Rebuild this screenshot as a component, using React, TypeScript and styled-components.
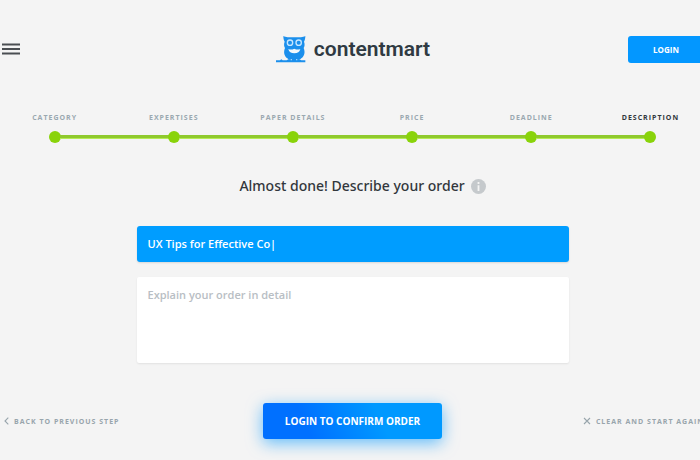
import React, { useState } from "react";
import styled, { createGlobalStyle } from "styled-components";

const GlobalStyle = createGlobalStyle`
  * { box-sizing: border-box; }
  body {
    margin: 0;
    background: #f4f4f4;
    color: #32373c;
    font-family: "Open Sans", "Noto Sans", sans-serif;
    overflow-x: hidden;
  }
  button, input, textarea { font: inherit; }
`;

const Shell = styled.div`
  min-height: 100vh;
  margin: 0 -10px 0 -5px;
  padding-top: 32px;
`;

const Header = styled.header`
  display: grid;
  grid-template-columns: 1fr auto 1fr;
  align-items: center;
  padding: 0 6px 0 7px;
`;

const MenuButton = styled.button`
  justify-self: start;
  display: flex;
  padding: 0;
  border: 0;
  background: none;
  color: #4a4e52;
  cursor: pointer;
`;

const Logo = styled.a`
  display: flex;
  align-items: center;
  gap: 8px;
  color: #2f3a42;
  font-family: Roboto, sans-serif;
  font-size: 21px;
  font-weight: 600;
  line-height: 34px;
  text-decoration: none;
`;

const LoginButton = styled.button`
  justify-self: end;
  width: 76px;
  height: 27px;
  padding: 0;
  border: 0;
  border-radius: 3px;
  background: #0397ff;
  color: #fff;
  font-size: 8px;
  font-weight: 700;
  cursor: pointer;
`;

const Steps = styled.ol`
  display: grid;
  grid-template-columns: repeat(6, 1fr);
  margin: 46px 0 0;
  padding: 0;
  list-style: none;
`;

const Step = styled.li<{ $current?: boolean }>`
  display: flex;
  flex-direction: column;
  align-items: center;
  gap: 7px;
  color: ${(p) => (p.$current ? "#32373c" : "#9aa8b0")};
  font-size: 7px;
  font-weight: 700;
  line-height: 12px;
  letter-spacing: 1px;
`;

const Track = styled.span`
  display: grid;
  grid-template-columns: 1fr 12px 1fr;
  align-items: center;
  width: 100%;
`;

const Line = styled.span<{ $hidden?: boolean }>`
  height: 4px;
  margin: 0 -1px;
  background: ${(p) => (p.$hidden ? "none" : "linear-gradient(#8fc92d 75%, #b5ec55 75%)")};
`;

const Dot = styled.span`
  height: 12px;
  border-radius: 50%;
  background: #89d30a;
`;

const Form = styled.form`
  display: flex;
  flex-direction: column;
`;

const Fields = styled.div`
  display: flex;
  flex-direction: column;
  gap: 15px;
  width: 432px;
  max-width: 100%;
  margin: 0 auto;
`;

const Title = styled.h1`
  display: flex;
  align-items: center;
  justify-content: center;
  gap: 6px;
  margin: 33px 0 30px;
  padding-left: 20px;
  font-family: "Noto Sans", sans-serif;
  font-size: 14px;
  font-weight: 500;
  line-height: 20px;
`;

const OrderTitle = styled.input`
  height: 36px;
  padding: 0 11px 2px;
  border: 0;
  border-radius: 3px;
  outline: 0;
  background: #009dff;
  box-shadow: 0 1px 2px #0000001f;
  color: #fff;
  font-size: 11px;
  font-weight: 600;
`;

const OrderDetail = styled.textarea`
  height: 86px;
  padding: 10px 11px;
  border: 0;
  border-radius: 2px;
  outline: 0;
  resize: none;
  background: #fff;
  box-shadow: 0 1px 2px #00000014;
  font-size: 11px;
  font-weight: 600;
  line-height: 16px;
  &::placeholder { color: #b8bec4; opacity: 1; }
`;

const Actions = styled.div`
  display: grid;
  grid-template-columns: 1fr auto 1fr;
  align-items: center;
  margin-top: 40px;
  padding: 0 2px;
`;

const TextButton = styled.button<{ $end?: boolean }>`
  justify-self: ${(p) => (p.$end ? "end" : "start")};
  display: flex;
  align-items: center;
  gap: 5px;
  padding: ${(p) => (p.$end ? "0 4px 0 0" : "0 0 0 7px")};
  border: 0;
  background: none;
  color: #98a5ac;
  font-size: 7px;
  font-weight: 700;
  letter-spacing: 1px;
  white-space: nowrap;
  cursor: pointer;
`;

const ConfirmButton = styled.button`
  width: 179px;
  height: 36px;
  padding: 0;
  border: 0;
  border-radius: 3px;
  background: linear-gradient(65deg, #0070ff 25%, #0099ff 65%);
  box-shadow: 0 4px 16px #0097ff99;
  color: #fff;
  font-size: 10px;
  font-weight: 700;
  cursor: pointer;
`;

const Owl = () => (
  <svg width="30" height="28" viewBox="0 0 90 84" aria-hidden="true">
    <path
      fill="#1b8fec"
      d="M22 3c8 5 16 3 33 4 17-1 25 1 33-4 0 9-2 13-4 17 3 7 2 14-1 19 5 12 3 24-7 31-3 3-8 5-11 5H45c-4 0-8-2-11-5-10-7-12-19-7-31-3-5-4-12-1-19-2-4-4-8-4-17z"
    />
    <path fill="#1b8fec" d="M0 76h12l4-3 4 3h12l5-3h33l6 3h12v6H0z" />
    <circle cx="42" cy="23" r="8" fill="#1b8fec" stroke="#c5e6ff" strokeWidth="4" />
    <circle cx="68" cy="23" r="8" fill="#1b8fec" stroke="#c5e6ff" strokeWidth="4" />
    <path fill="#f4f9fd" d="M37 42c6 3 12 2 18-1 6 3 12 4 18 1-2 9-8 13-18 13s-16-4-18-13z" />
    <path fill="#1b8fec" d="M51 33h8l-4 8z" />
    <path d="M46 72v4m16-4v4" stroke="#9dd2fb" strokeWidth="4" />
  </svg>
);

const steps = ["CATEGORY", "EXPERTISES", "PAPER DETAILS", "PRICE", "DEADLINE", "DESCRIPTION"];

export default function App() {
  const [title, setTitle] = useState("UX Tips for Effective Co|");
  const [detail, setDetail] = useState("");
  const last = steps.length - 1;

  return (
    <>
      <GlobalStyle />
      <Shell>
        <Header>
          <MenuButton type="button" aria-label="Menu">
            <svg width="18" height="12" viewBox="0 0 18 12" aria-hidden="true">
              <path d="M0 1.5h18M0 6h18M0 10.5h18" stroke="currentColor" strokeWidth="1.8" />
            </svg>
          </MenuButton>
          <Logo href="#">
            <Owl />
            contentmart
          </Logo>
          <LoginButton type="button">LOGIN</LoginButton>
        </Header>
        <Steps>
          {steps.map((name, i) => (
            <Step key={name} $current={i === last} aria-current={i === last ? "step" : undefined}>
              {name}
              <Track>
                <Line $hidden={i === 0} />
                <Dot />
                <Line $hidden={i === last} />
              </Track>
            </Step>
          ))}
        </Steps>
        <Form onSubmit={(e) => e.preventDefault()}>
          <Title>
            Almost done! Describe your order
            <svg width="15" height="15" viewBox="0 0 15 15" aria-hidden="true">
              <circle cx="7.5" cy="7.5" r="7.5" fill="#c5c9cc" />
              <path d="M7.5 3v2M7.5 6.3V12" stroke="#f4f4f4" strokeWidth="1.8" />
            </svg>
          </Title>
          <Fields>
            <OrderTitle aria-label="Order title" value={title} onChange={(e) => setTitle(e.target.value)} />
            <OrderDetail
              aria-label="Order details"
              placeholder="Explain your order in detail"
              value={detail}
              onChange={(e) => setDetail(e.target.value)}
            />
          </Fields>
          <Actions>
            <TextButton type="button">
              <svg width="5" height="8" viewBox="0 0 5 8" aria-hidden="true">
                <path d="M4.3.7 1 4l3.3 3.3" fill="none" stroke="currentColor" strokeWidth="1.1" />
              </svg>
              BACK TO PREVIOUS STEP
            </TextButton>
            <ConfirmButton type="submit">LOGIN TO CONFIRM ORDER</ConfirmButton>
            <TextButton type="button" $end>
              <svg width="8" height="8" viewBox="0 0 8 8" aria-hidden="true">
                <path d="m1 1 6 6M7 1 1 7" stroke="currentColor" strokeWidth="1.1" />
              </svg>
              CLEAR AND START AGAIN
            </TextButton>
          </Actions>
        </Form>
      </Shell>
    </>
  );
}
